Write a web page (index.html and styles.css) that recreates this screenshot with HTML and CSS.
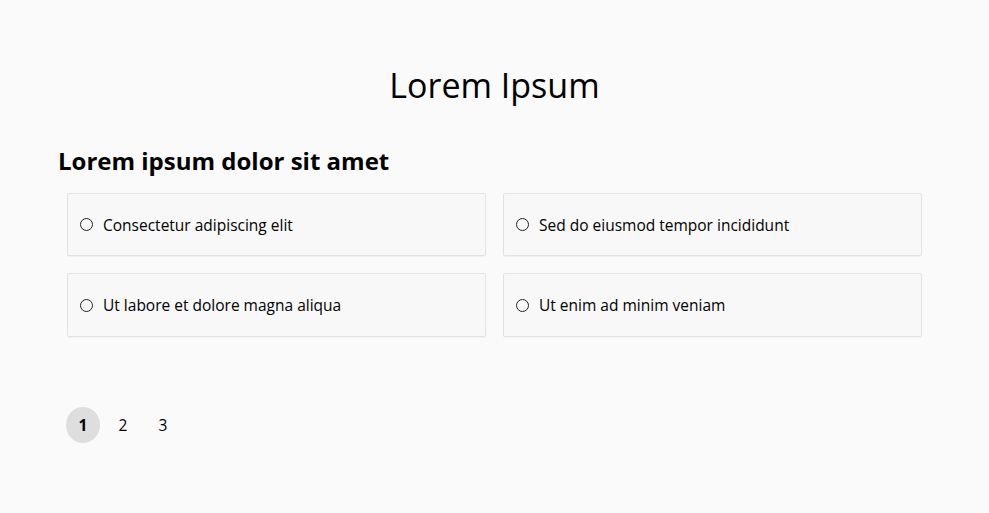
FILE: index.html
```html
<!DOCTYPE html>
<html>
<head>
    <meta charset="UTF-8">
    <title>Lorem Ipsum</title>
    <link rel="stylesheet" href="styles.css">
</head>
<body>
    <div class="page">
        <h1 class="page-title">Lorem Ipsum</h1>

        <section class="question">
            <h2 class="question-title">Lorem ipsum dolor sit amet</h2>
            <div class="options">
                <label class="option">
                    <span class="radio"></span>
                    <span class="option-text">Consectetur adipiscing elit</span>
                </label>
                <label class="option">
                    <span class="radio"></span>
                    <span class="option-text">Sed do eiusmod tempor incididunt</span>
                </label>
                <label class="option">
                    <span class="radio"></span>
                    <span class="option-text">Ut labore et dolore magna aliqua</span>
                </label>
                <label class="option">
                    <span class="radio"></span>
                    <span class="option-text">Ut enim ad minim veniam</span>
                </label>
            </div>
        </section>

        <nav class="pager">
            <button class="page-link active">1</button>
            <button class="page-link">2</button>
            <button class="page-link">3</button>
        </nav>
    </div>
</body>
</html>
```

FILE: styles.css
```css
:root {
    --background-color: #fafafa;
    --border-color: #e3e3e3;
    --text-color: #000;
    --active-page: #dedede;
}
body {
    font-family: "Open Sans", "Noto Sans", sans-serif;
    background-color: var(--background-color);
    color: var(--text-color);
    margin: 0;
    padding: 0;
}
.page { padding: 0 67px; }
.page-title {
    margin: 0; padding-top: 62px;
    font-size: 34px; font-weight: 400; text-align: center; line-height: 46px;
}
.question { margin-top: 36px; }
.question-title {
    margin: 0 0 0 -9px; font-size: 24px; font-weight: 700; line-height: 34px;
}
.options {
    display: grid; grid-template-columns: 1fr 1fr; gap: 17px;
    margin-top: 15px;
}
.option {
    display: flex; align-items: center; height: 63px; box-sizing: border-box;
    padding: 0 12px; border: 1px solid var(--border-color); border-radius: 2px;
    background-color: #f8f8f8; box-shadow: 0 1px 1px rgba(0, 0, 0, 0.04);
    font-size: 15.5px; cursor: pointer;
}
.option:nth-child(n+3) { height: 64px; }
.radio {
    width: 11px; height: 11px; border: 1px solid #222; border-radius: 50%;
    margin-right: 10px; flex-shrink: 0;
}
.pager { display: flex; gap: 6px; margin-top: 70px; margin-left: -1px; }
.page-link {
    width: 34px; height: 36px; border: none; border-radius: 50%;
    background: none; font-family: inherit; font-size: 15.5px; color: #000; padding: 0;
}
.page-link.active { background-color: var(--active-page); font-weight: 700; }
```
